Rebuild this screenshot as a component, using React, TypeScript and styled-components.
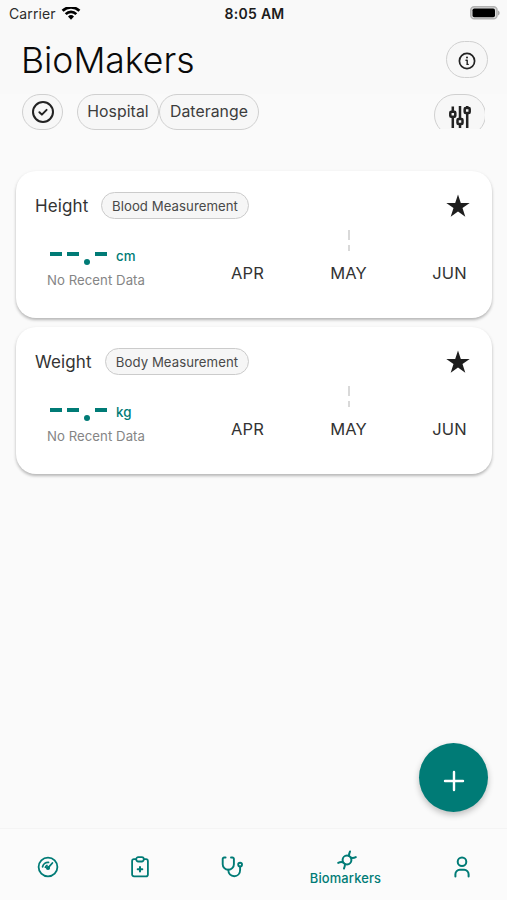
import React from 'react';
import styled, { createGlobalStyle } from 'styled-components';

const TEAL = '#007b76';

const GlobalStyle = createGlobalStyle`
  * { box-sizing: border-box; }
  body { margin: 0; background: #fafafa; }
  svg { display: block; flex: none; }
`;

const Screen = styled.div`
  width: 507px;
  height: 900px;
  display: flex;
  flex-direction: column;
  overflow: hidden;
  background: #fafafa;
  color: #333;
  font-family: Inter, sans-serif;
`;

const StatusBar = styled.div`
  height: 28px;
  padding: 0 7px 2px 9px;
  display: grid;
  grid-template-columns: 1fr auto 1fr;
  align-items: center;
  background: #f9f9f9;
`;

const Carrier = styled.div`
  display: flex;
  align-items: center;
  gap: 5px;
  padding-top: 2px;
  font-size: 14px;
  line-height: 20px;
  letter-spacing: 0.1px;
  color: #2d2d2d;
`;

const Clock = styled.div`
  padding-top: 2px;
  font-size: 14px;
  font-weight: 600;
  line-height: 20px;
  letter-spacing: 0.3px;
  color: #1c1c1c;
`;

const BatterySlot = styled.div`
  justify-self: end;
`;

const TitleBar = styled.header`
  height: 66px;
  padding: 0 19px 0 21px;
  display: flex;
  align-items: center;
  justify-content: space-between;
  background: #f9f9f9;
`;

const Title = styled.h1`
  margin: 0;
  font-size: 35.5px;
  font-weight: 300;
  line-height: 44px;
  letter-spacing: 0;
  color: #0a0a0a;
`;

const RoundButton = styled.button<{ $w: number; $h: number; $drop?: number; $lift?: number }>`
  width: ${(p) => p.$w}px;
  height: ${(p) => p.$h}px;
  flex: none;
  margin-bottom: ${(p) => p.$lift ?? 0}px;
  padding: ${(p) => p.$drop ?? 0}px 0 0;
  display: flex;
  align-items: center;
  justify-content: center;
  border: 1px solid #d0d0d0;
  border-radius: 22px;
  background: #f7f7f7;
  color: #222;
`;

const FilterBar = styled.div`
  height: 36px;
  padding: 0 22px 0 22px;
  display: flex;
  align-items: flex-start;
`;

const Chips = styled.div`
  display: flex;
  margin-left: 14px;
`;

const Chip = styled.button<{ $w: number }>`
  width: ${(p) => p.$w}px;
  height: 36px;
  padding: 0;
  border: 1px solid #d0d0d0;
  border-radius: 18px;
  background: #f7f7f7;
  font: 400 15.8px/34px Inter, sans-serif;
  letter-spacing: 0.05px;
  color: #3c3c3c;
`;

const FilterClip = styled.div`
  width: 51px;
  height: 35px;
  margin-left: auto;
  overflow: hidden;
`;

const CardList = styled.main`
  flex: 1;
  padding: 41px 15px 0 16px;
  display: flex;
  flex-direction: column;
  gap: 9px;
`;

const Card = styled.article`
  height: 147px;
  padding: 20px 22px 0 19px;
  border-radius: 20px;
  background: #fff;
  box-shadow: 0 2px 3px rgba(0, 0, 0, 0.25), 0 1px 5px rgba(0, 0, 0, 0.04);
`;

const CardHeader = styled.div`
  height: 28px;
  display: flex;
  align-items: center;
`;

const CardName = styled.h2`
  margin: 0;
  padding-top: 1px;
  font-size: 17px;
  font-weight: 400;
  line-height: 24px;
  letter-spacing: 0.1px;
  color: #333;
`;

const Tag = styled.span<{ $w: number }>`
  width: ${(p) => p.$w}px;
  height: 27px;
  margin-left: auto;
  border: 1px solid #cbcbcb;
  border-radius: 14px;
  background: #f6f6f6;
  font-size: 13.2px;
  line-height: 27px;
  letter-spacing: 0.05px;
  text-align: center;
  color: #494949;
`;

const NameGroup = styled.div`
  width: 214px;
  display: flex;
  align-items: center;
`;

const StarSlot = styled.div`
  margin-left: auto;
  padding-top: 2px;
  color: #1e1e1e;
`;

const CardBody = styled.div`
  display: flex;
  height: 80px;
`;

const Reading = styled.div`
  width: 162px;
  flex: none;
  padding: 26px 0 0 12px;
`;

const ValueRow = styled.div`
  display: flex;
  align-items: center;
  height: 22px;
  gap: 8px;
  color: ${TEAL};
`;

const Dashes = styled.span`
  display: flex;
  width: 61px;
  height: 22px;
  padding: 7px 0 0 3px;
  gap: 5px;
`;

const Dash = styled.i`
  width: 12px;
  height: 4px;
  background: ${TEAL};
`;

const Point = styled.i`
  width: 6px;
  height: 6px;
  margin: 7px 0 0 0;
  border-radius: 50%;
  background: ${TEAL};
`;

const Unit = styled.span`
  font-size: 13.3px;
  font-weight: 500;
  line-height: 20px;
`;

const Note = styled.div`
  margin-top: 4px;
  font-size: 13.2px;
  line-height: 18px;
  letter-spacing: 0.05px;
  color: #858585;
`;

const Months = styled.div`
  flex: none;
  display: grid;
  grid-template-columns: repeat(3, 101px);
  padding-top: 11px;
`;

const Month = styled.div`
  display: flex;
  flex-direction: column;
  align-items: center;
  font-size: 16.5px;
  line-height: 22px;
  letter-spacing: 0.1px;
  color: #333;
`;

const Marker = styled.div<{ $on: boolean }>`
  width: 2px;
  height: 21px;
  margin-bottom: 11px;
  background: ${(p) =>
    p.$on
      ? 'linear-gradient(#d9d9d9 0 10px, transparent 10px 15px, #d9d9d9 15px)'
      : 'none'};
`;

const FabRow = styled.div`
  height: 85px;
  padding-right: 19px;
  display: flex;
  justify-content: flex-end;
`;

const Fab = styled.button`
  width: 69px;
  height: 69px;
  padding: 6px 0 0;
  display: flex;
  align-items: center;
  justify-content: center;
  border: 0;
  border-radius: 50%;
  background: ${TEAL};
  color: #fff;
  box-shadow: 0 3px 6px rgba(0, 0, 0, 0.24);
`;

const TabBar = styled.nav`
  height: 72px;
  padding-top: 4px;
  display: grid;
  grid-template-columns: 95px 90px 94px 133px 99px;
  align-items: center;
  border-top: 1px solid #f4f4f4;
  background: #fbfbfb;
`;

const Tab = styled.div`
  display: flex;
  flex-direction: column;
  align-items: center;
  color: ${TEAL};
`;

const ActiveTab = styled(Tab)`
  padding-top: 4px;

  svg {
    margin-left: 3px;
  }
`;

const TabLabel = styled.span`
  font-size: 12.9px;
  font-weight: 500;
  line-height: 17px;
  letter-spacing: 0.15px;
`;

const stroke = {
  fill: 'none',
  stroke: 'currentColor',
  strokeLinecap: 'round' as const,
  strokeLinejoin: 'round' as const,
};

const WifiIcon = () => (
  <svg width="20" height="15" viewBox="0 0 20 15" fill="none" stroke="#000" strokeWidth="2.7">
    <path d="M1.6 3.800a12 12 0 0 1 16.8 0" />
    <path d="M4.7 7.100a7.5 7.5 0 0 1 10.6 0" />
    <path d="M7 9.500a4.4 4.4 0 0 1 6 0l-3 3.200z" fill="#000" stroke="none" />
  </svg>
);

const BatteryIcon = () => (
  <svg width="30" height="14" viewBox="0 0 30 14">
    <rect x=".8" y=".8" width="26.2" height="12" rx="3.4" fill="#dcdcdc" stroke="#b2b2b2" strokeWidth="1.6" />
    <rect x="2.500" y="2.400" width="22.500" height="8.800" rx="1.8" fill="#000" />
    <path d="M28 4.500c2.200.8 2.200 4.200 0 5z" fill="#aaa" />
  </svg>
);

const InfoIcon = () => (
  <svg width="18" height="18" viewBox="0 0 18 18" {...stroke} strokeWidth="1.700">
    <circle cx="9" cy="9" r="7.600" />
    <path d="M8 8.300h1.200v4M9 12.400h1.200" strokeWidth="1.400" />
    <circle cx="9" cy="5.400" r="1" fill="currentColor" stroke="none" />
  </svg>
);

const CheckIcon = () => (
  <svg width="24" height="24" viewBox="0 0 24 24" {...stroke} strokeWidth="2">
    <circle cx="12" cy="12" r="10" />
    <path d="M8.400 12.200l2.500 2.400 4.700-4.700" />
  </svg>
);

const SlidersIcon = () => (
  <svg width="24" height="24" viewBox="0 0 24 24" {...stroke} strokeWidth="2.500" strokeLinecap="butt">
    <path d="M4.800 1.500v5M4.800 12v11M12 1v12.500M12 19.500v3.500M19.200 1v1.500M19.200 8.500v14.500" />
    <rect x="2.300" y="6.800" width="5" height="5" rx="1" />
    <rect x="9.500" y="14" width="5" height="5" rx="1" />
    <rect x="16.700" y="3" width="5" height="5" rx="1" />
  </svg>
);

const StarIcon = () => (
  <svg width="24" height="24" viewBox="0 0 24 24" fill="currentColor">
    <path d="M12 .6l2.800 8.300h8.900l-7.200 5.200 2.800 8.600L12 17.500l-7.300 5.200 2.800-8.600L.3 8.900h8.900z" />
  </svg>
);

const PlusIcon = () => (
  <svg width="22" height="22" viewBox="0 0 22 22" {...stroke} strokeWidth="2.400">
    <path d="M11 2v18M2 11h18" />
  </svg>
);

const GaugeIcon = () => (
  <svg width="22" height="22" viewBox="0 0 22 22" {...stroke} strokeWidth="1.800">
    <circle cx="11" cy="11" r="9.400" />
    <path d="M5.600 10.800a5.600 5.600 0 0 1 5.900-4.400M8.400 11.200a3 3 0 0 1 1.500-1.700M11.500 11.300l3.900-4.300" />
    <circle cx="11" cy="12" r="1.200" fill="currentColor" />
  </svg>
);

const ClipboardIcon = () => (
  <svg width="22" height="22" viewBox="0 0 22 22" {...stroke} strokeWidth="1.800">
    <path d="M7.200 3.200H5A1.900 1.900 0 0 0 3.100 5v13.400a1.900 1.900 0 0 0 1.900 1.900h12a1.900 1.900 0 0 0 1.900-1.900V5A1.900 1.900 0 0 0 17 3.200h-2.200" />
    <rect x="7.200" y="1.200" width="7.600" height="4.300" rx="2" />
    <path d="M11 11v4.600M8.700 13.300h4.600" strokeWidth="2" />
  </svg>
);

const StethoscopeIcon = () => (
  <svg width="22" height="22" viewBox="0 0 22 22" {...stroke} strokeWidth="1.900">
    <path d="M4.600 1.500H3.200A1.500 1.500 0 0 0 1.700 3v5.200a5.600 5.600 0 0 0 11.200 0V3a1.500 1.500 0 0 0-1.500-1.500H10" />
    <path d="M7.300 13.800c0 3.600 2.400 6.400 5.900 6.400s5.900-2.600 5.900-6.200v-3.300" />
    <circle cx="19.100" cy="8.600" r="1.900" />
  </svg>
);

const BiomarkerIcon = () => (
  <svg width="22" height="20" viewBox="0 0 22 20" {...stroke} strokeWidth="2">
    <circle cx="11" cy="10" r="4.400" />
    <path d="M13.100 6.100c-.2-1.700.1-3 .9-4.600M14.500 7.400c1.700.9 3.200.8 5.300-.3M8.900 13.900c.2 1.700-.1 3-.9 4.600M7.500 12.600c-1.700-.9-3.200-.8-5.300.3" />
  </svg>
);

const PersonIcon = () => (
  <svg width="22" height="22" viewBox="0 0 22 22" {...stroke} strokeWidth="2">
    <circle cx="11" cy="5.700" r="4.300" />
    <path d="M4.400 20.500v-2.300a4.400 4.400 0 0 1 4.400-4.400h4.400a4.400 4.400 0 0 1 4.400 4.400v2.300" />
  </svg>
);

interface Biomarker {
  name: string;
  tag: string;
  tagWidth: number;
  unit: string;
}

const biomarkers: Biomarker[] = [
  { name: 'Height', tag: 'Blood Measurement', tagWidth: 148, unit: 'cm' },
  { name: 'Weight', tag: 'Body Measurement', tagWidth: 144, unit: 'kg' },
];

const BiomarkerCard = ({ name, tag, tagWidth, unit }: Biomarker) => (
  <Card>
    <CardHeader>
      <NameGroup>
        <CardName>{name}</CardName>
        <Tag $w={tagWidth}>{tag}</Tag>
      </NameGroup>
      <StarSlot>
        <StarIcon />
      </StarSlot>
    </CardHeader>
    <CardBody>
      <Reading>
        <ValueRow>
          <Dashes>
            <Dash />
            <Dash />
            <Point />
            <Dash />
          </Dashes>
          <Unit>{unit}</Unit>
        </ValueRow>
        <Note>No Recent Data</Note>
      </Reading>
      <Months>
        {['APR', 'MAY', 'JUN'].map((m) => (
          <Month key={m}>
            <Marker $on={m === 'MAY'} />
            {m}
          </Month>
        ))}
      </Months>
    </CardBody>
  </Card>
);

export default function App() {
  return (
    <>
      <GlobalStyle />
      <Screen>
        <StatusBar>
          <Carrier>
            Carrier
            <WifiIcon />
          </Carrier>
          <Clock>8:05 AM</Clock>
          <BatterySlot>
            <BatteryIcon />
          </BatterySlot>
        </StatusBar>
        <TitleBar>
          <Title>BioMakers</Title>
          <RoundButton $w={42} $h={37} $drop={3} $lift={3} aria-label="Information">
            <InfoIcon />
          </RoundButton>
        </TitleBar>
        <FilterBar>
          <RoundButton $w={41} $h={36} aria-label="Selected">
            <CheckIcon />
          </RoundButton>
          <Chips>
            <Chip $w={82}>Hospital</Chip>
            <Chip $w={100}>Daterange</Chip>
          </Chips>
          <FilterClip>
            <RoundButton $w={52} $h={42} $drop={3} aria-label="Filters">
              <SlidersIcon />
            </RoundButton>
          </FilterClip>
        </FilterBar>
        <CardList>
          {biomarkers.map((b) => (
            <BiomarkerCard key={b.name} {...b} />
          ))}
        </CardList>
        <FabRow>
          <Fab aria-label="Add">
            <PlusIcon />
          </Fab>
        </FabRow>
        <TabBar>
          <Tab>
            <GaugeIcon />
          </Tab>
          <Tab>
            <ClipboardIcon />
          </Tab>
          <Tab>
            <StethoscopeIcon />
          </Tab>
          <ActiveTab>
            <BiomarkerIcon />
            <TabLabel>Biomarkers</TabLabel>
          </ActiveTab>
          <Tab>
            <PersonIcon />
          </Tab>
        </TabBar>
      </Screen>
    </>
  );
}
